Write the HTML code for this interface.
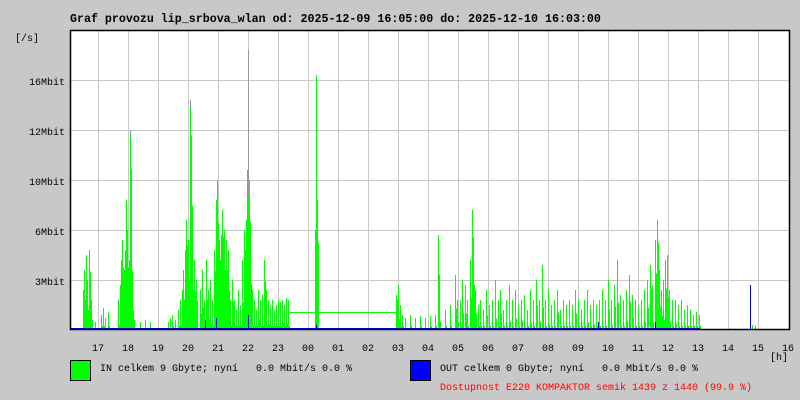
<!DOCTYPE html>
<html><head><meta charset="utf-8"><style>
body{margin:0;background:#c8c8c8;}
svg{display:block}
text{font-family:"Liberation Mono",monospace;font-size:10px;fill:#000;white-space:pre}
</style></head><body>
<svg width="800" height="400" xmlns="http://www.w3.org/2000/svg">
<rect width="800" height="400" fill="#c8c8c8"/>
<text x="70" y="22" style="font-size:11.65px;font-weight:bold">Graf provozu lip_srbova_wlan od: 2025-12-09 16:05:00 do: 2025-12-10 16:03:00</text>
<rect x="70" y="30" width="720" height="300" fill="#fff"/>
<g stroke="#c8c8c8" stroke-width="1">
<path d="M98.5 30V330M128.5 30V330M158.5 30V330M188.5 30V330M218.5 30V330M248.5 30V330M278.5 30V330M308.5 30V330M338.5 30V330M368.5 30V330M398.5 30V330M428.5 30V330M458.5 30V330M488.5 30V330M518.5 30V330M548.5 30V330M578.5 30V330M608.5 30V330M638.5 30V330M668.5 30V330M698.5 30V330M728.5 30V330M758.5 30V330"/>
<path d="M70 80.5H790M70 130.5H790M70 180.5H790M70 230.5H790M70 280.5H790"/>
</g>
<path stroke="#999" d="M248.5 50V330M190.5 100V330M130.5 130V330"/>
<path id="g" stroke="#00ff00" stroke-width="1" fill="none" d=""/>
<path stroke="#00ff00" fill="none" d="M290 312.5H397M316.5 75V312"/>
<path id="b" stroke="#0000ff" fill="none" d="M70 328.5H700M750.5 285V329M248.5 315V329M216.5 318V329M205.5 320V329M655.5 322V329M598.5 322V329M316.5 325V329"/>
<rect x="70.5" y="30.5" width="719" height="299" fill="none" stroke="#000" stroke-width="1.5"/>
<text x="15" y="41">[/s]</text>
<text x="29" y="85">16Mbit</text>
<text x="29" y="135">12Mbit</text>
<text x="29" y="185">10Mbit</text>
<text x="35" y="235">6Mbit</text>
<text x="35" y="285">3Mbit</text>
<g text-anchor="middle">
<text x="98" y="351">17</text><text x="128" y="351">18</text><text x="158" y="351">19</text><text x="188" y="351">20</text><text x="218" y="351">21</text><text x="248" y="351">22</text><text x="278" y="351">23</text><text x="308" y="351">00</text><text x="338" y="351">01</text><text x="368" y="351">02</text><text x="398" y="351">03</text><text x="428" y="351">04</text><text x="458" y="351">05</text><text x="488" y="351">06</text><text x="518" y="351">07</text><text x="548" y="351">08</text><text x="578" y="351">09</text><text x="608" y="351">10</text><text x="638" y="351">11</text><text x="668" y="351">12</text><text x="698" y="351">13</text><text x="728" y="351">14</text><text x="758" y="351">15</text><text x="788" y="351">16</text>
</g>
<text x="770" y="360">[h]</text>
<rect x="70.5" y="360.5" width="20" height="20" fill="#00ff00" stroke="#000"/>
<text x="100" y="371">IN celkem 9 Gbyte; nyní   0.0 Mbit/s 0.0 %</text>
<rect x="410.5" y="360.5" width="20" height="20" fill="#0000ff" stroke="#000"/>
<text x="440" y="371">OUT celkem 0 Gbyte; nyní   0.0 Mbit/s 0.0 %</text>
<text x="440" y="390" style="fill:#ff0000">Dostupnost E220 KOMPAKTOR semik 1439 z 1440 (99.9 %)</text>
</svg>
<script>
var s="83:290,84:270,85:300,86:255,87:280,88:310,89:250,90:290,91:300,92:320,95:322,101:315,103:308,105:318,108:312,118:300,120:285,121:260,122:240,123:290,124:270,125:250,126:200,127:230,128:280,129:260,130:135,131:230,132:300,133:310,134:320,140:322,145:320,150:322,168:322,170:318,172:315,175:320,178:310,180:300,182:290,183:270,184:300,185:250,186:220,187:260,188:240,189:280,190:107,191:170,192:250,193:290,194:260,195:300,196:280,200:290,202:270,204:300,206:260,208:290,210:280,212:300,214:250,216:200,217:180,218:230,219:240,220:260,221:235,222:210,223:250,224:230,225:270,226:240,227:285,228:250,229:290,230:300,232:280,234:300,236:310,238:290,240:305,242:260,244:230,245:250,246:220,247:170,249:180,250:260,252:290,254:300,256:310,258:290,260:300,262:295,264:260,266:290,268:300,270:305,272:300,274:310,276:305,278:300,280:302,282:300,284:305,286:298,288:300,315:230,317:200,396:295,397:300,398:285,400:305,402:315,405:318,410:315,415:318,420:316,425:318,430:316,435:315,438:235,439:300,445:310,450:305,455:275,457:300,460:300,462:280,465:285,467:300,470:260,472:210,473:250,475:290,478:305,480:300,483:310,486:290,489:305,492:300,495:280,498:300,500:290,503:310,506:300,509:285,512:300,515:290,518:305,521:300,524:295,527:310,530:290,533:300,536:280,539:300,542:265,545:300,548:290,551:305,554:300,557:290,560:310,563:300,566:305,569:300,572:305,575:290,578:300,581:310,584:300,587:290,590:305,593:300,596:305,599:300,602:290,605:300,608:280,611:300,614:285,617:260,620:295,623:300,626:290,629:275,632:295,635:300,638:305,641:300,644:290,647:280,650:265,652:285,655:240,657:220,659:270,661:290,663:280,665:260,667:255,669:290,672:300,675:300,678:305,681:300,684:310,687:305,690:310,693:315,696:312,699:315,750:320,752:325,755:326";
var d="";s.split(",").forEach(function(p){var a=p.split(":");var x=+a[0]+0.5;var t=+a[1];d+="M"+x+" 329V"+t;var t2=Math.min(326,t+20+((x*7)%25));if(t<318)d+="M"+(x+1)+" 329V"+t2;});
document.getElementById("g").setAttribute("d",d);
</script>
</body></html>
